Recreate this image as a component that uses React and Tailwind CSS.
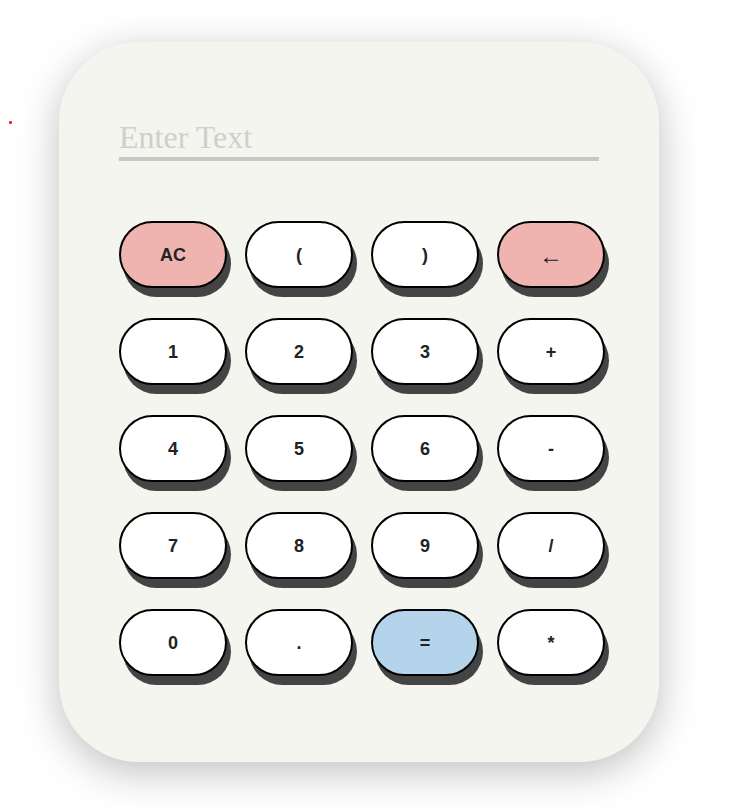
import React, { useState } from "react"

const keys = [
  ["AC", "pink"], ["(", "white"], [")", "white"], ["←", "pink"],
  ["1", "white"], ["2", "white"], ["3", "white"], ["+", "white"],
  ["4", "white"], ["5", "white"], ["6", "white"], ["-", "white"],
  ["7", "white"], ["8", "white"], ["9", "white"], ["/", "white"],
  ["0", "white"], [".", "white"], ["=", "blue"], ["*", "white"],
]

const bg = {
  pink: "bg-[#efb4b0]",
  white: "bg-white",
  blue: "bg-[#b4d4ec]",
}

export default function App() {
  const [value, setValue] = useState("")

  function press(k) {
    if (k === "AC") setValue("")
    else if (k === "←") setValue((v) => v.slice(0, -1))
    else if (k === "=") {
      try {
        // eslint-disable-next-line no-new-func
        setValue(String(Function(`return (${value})`)()))
      } catch {
        setValue("Error")
      }
    } else setValue((v) => v + k)
  }

  return (
    <div className="relative min-h-screen bg-white">
      {/* stray dot */}
      <div className="absolute left-[9px] top-[121px] w-[3px] h-[3px] rounded-[1px] bg-[#ff1a1a]" />

      <div className="pt-[42px] pl-[59px]">
        <div className="w-[600px] h-[720px] rounded-[80px] bg-[#f5f5f0] shadow-[0_10px_40px_rgba(0,0,0,0.25)] px-[60px] pt-[77px]">
          <input
            value={value}
            onChange={(e) => setValue(e.target.value)}
            placeholder="Enter Text"
            className="w-[480px] bg-transparent border-b-[4px] border-[#c8c8c4] text-[32px] leading-[36px] pb-[2px] text-[#333] placeholder:text-[#cfcfcb] outline-none font-['Liberation_Serif','Times_New_Roman',serif]"
          />

          <div className="grid grid-cols-[repeat(4,107px)] gap-x-[19px] gap-y-[30px] mt-[60px]">
            {keys.map(([k, c]) => (
              <button
                key={k}
                onClick={() => press(k)}
                className={`h-[67px] w-[108px] rounded-[34px] border-2 border-black ${bg[c]} shadow-[4px_9px_0_#444] text-[#222] pt-[2px] font-['Liberation_Sans',Arial,sans-serif] ${
                  k === "←" ? "text-[24px] font-normal" : "text-[18px] font-bold"
                }`}
              >
                {k}
              </button>
            ))}
          </div>
        </div>
      </div>
    </div>
  )
}
